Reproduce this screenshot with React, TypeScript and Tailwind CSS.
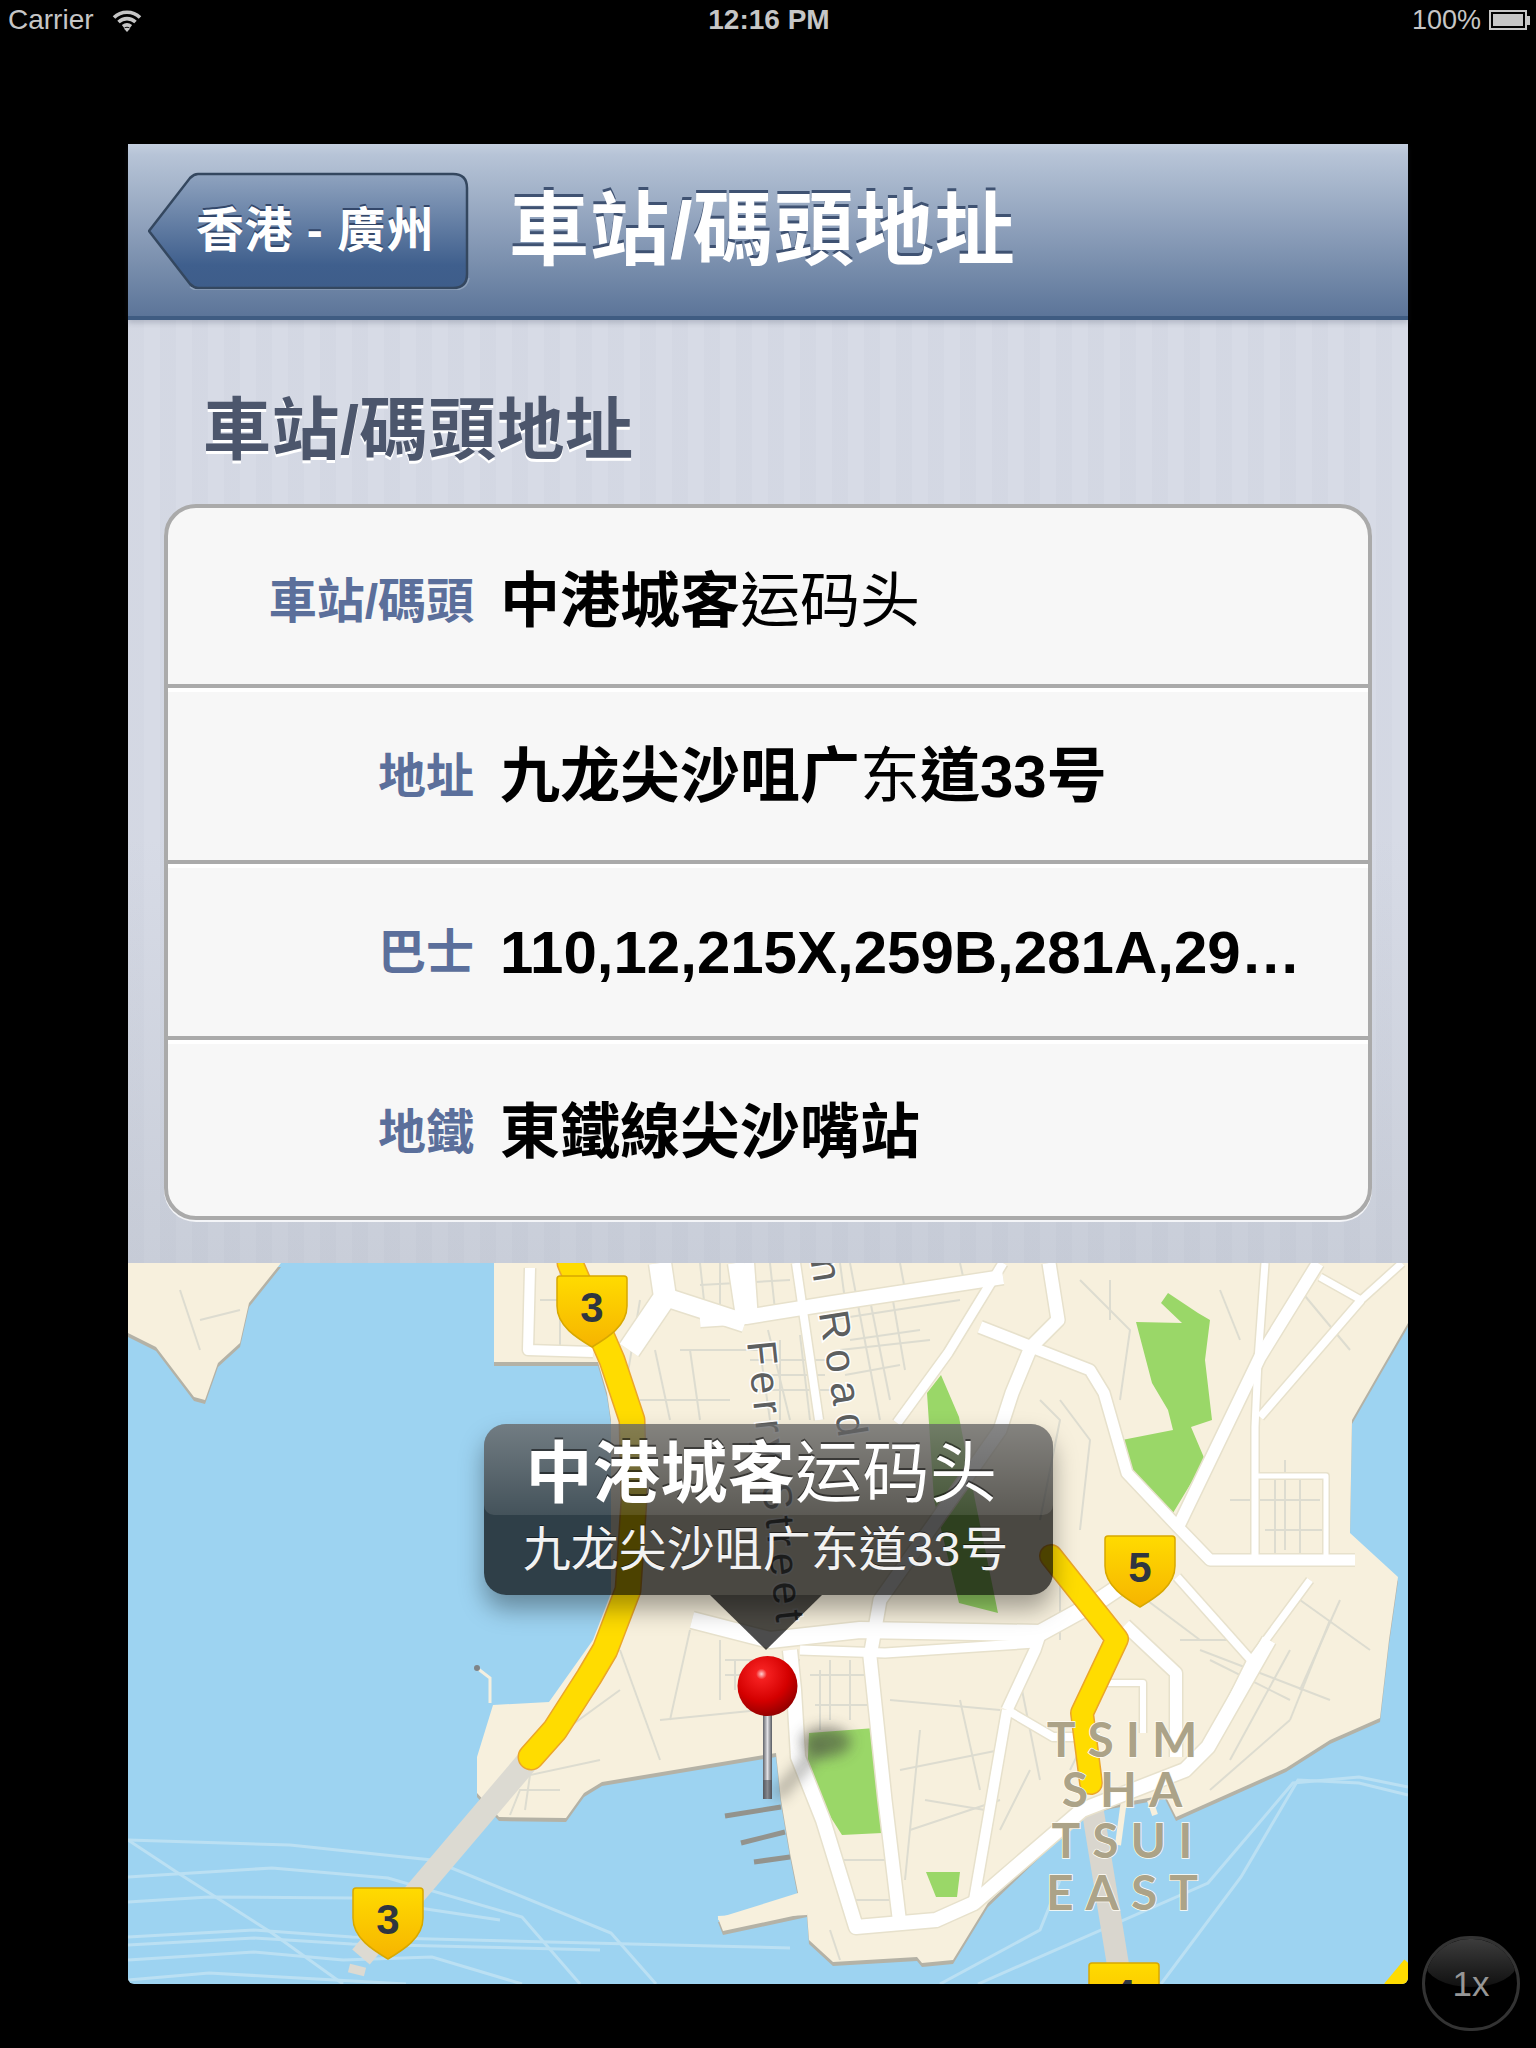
import React from "react";

const land =
  "494,1263 494,1362 598,1362 607,1393 611,1420 611,1593 593,1640 549,1702 493,1705 477,1757 477,1793 499,1817 566,1818 584,1793 602,1782 776,1753 781,1800 790,1853 798,1893 718,1918 723,1931 807,1913 809,1940 833,1962 917,1957 922,1963 953,1960 988,1903 1082,1813 1110,1805 1165,1795 1176,1817 1286,1768 1330,1740 1380,1718 1389,1640 1398,1577 1350,1533 1352,1420 1379,1373 1408,1323 1408,1263";
const islet = "128,1263 281,1263 249,1303 240,1343 218,1363 205,1400 194,1397 156,1347 128,1333";

const parks = [
  "1168,1293 1198,1313 1210,1320 1205,1360 1210,1403 1212,1420 1191,1427 1205,1460 1173,1513 1125,1467 1122,1440 1173,1430 1168,1410 1152,1383 1136,1322 1182,1323 1161,1303",
  "941,1375 959,1417 975,1500 998,1613 959,1603 934,1500 927,1393",
  "809,1733 875,1728 882,1833 842,1835 807,1780",
  "926,1872 960,1872 957,1897 936,1897",
];

const roads: [string, number][] = [
  ["1318,1263 1260,1357 1178,1527", 12],
  ["1265,1263 1258,1360 1255,1427 1255,1560", 7],
  ["1320,1277 1361,1300 1402,1263", 7],
  ["1361,1300 1260,1417", 8],
  ["1049,1263 1058,1320 1031,1347 1012,1393 1000,1430 880,1600 870,1657 885,1800 899,1917", 13],
  ["1031,1347 1090,1370 1104,1393 1127,1473 1178,1527 1210,1560 1355,1560", 11],
  ["980,1327 1031,1347", 12],
  ["1003,1263 948,1353 897,1423", 9],
  ["700,1320 746,1317 833,1303 1003,1277", 14],
  ["746,1263 750,1320", 16],
  ["796,1263 819,1420", 8],
  ["530,1268 528,1350 593,1352", 10],
  ["660,1263 665,1297 629,1350", 22],
  ["665,1297 745,1323", 18],
  ["736,1263 745,1323", 16],
  ["692,1620 770,1640 860,1630 1040,1633 1100,1600 1130,1580", 16],
  ["1177,1577 1251,1660", 8],
  ["1125,1625 1176,1673 1176,1757", 12],
  ["1269,1640 1208,1747 1185,1770 1082,1810 974,1903 936,1920 856,1927 823,1820 798,1757 794,1690 790,1650", 14],
  ["1007,1710 974,1900", 10],
  ["1007,1710 1035,1650 1040,1635", 11],
  ["1007,1710 1053,1737 1100,1737", 8],
  ["800,1650 885,1653 1035,1643", 9],
  ["1105,1683 1143,1683 1143,1733", 6],
  ["1310,1580 1251,1660 1208,1747", 7],
  ["1255,1476 1326,1476 1326,1560", 5],
];

const streets = [
  "540,1300 610,1300", "560,1263 560,1350", "680,1350 760,1350 770,1420", "690,1350 700,1420", "640,1400 730,1400", "655,1350 670,1420",
  "720,1263 720,1320", "780,1340 780,1420", "750,1360 830,1360", "760,1390 830,1390", "850,1263 880,1420", "830,1320 960,1300", "840,1350 930,1340",
  "768,1330 790,1420", "800,1335 810,1420", "760,1375 825,1375", "870,1300 890,1400", "892,1295 905,1370", "850,1340 920,1330", "845,1375 900,1365",
  "700,1263 705,1310", "770,1263 775,1310", "700,1285 790,1280", "840,1263 845,1300", "900,1263 905,1290", "960,1263 965,1285",
  "1080,1280 1130,1330 1120,1400", "1060,1400 1090,1440 1080,1530", "1230,1500 1320,1500", "1285,1460 1285,1550", "1300,1290 1350,1350", "1060,1560 1060,1640",
  "1040,1400 1060,1420 1040,1520", "1110,1280 1110,1320", "1220,1290 1240,1340", "1275,1476 1275,1560", "1300,1476 1300,1560", "1265,1530 1330,1530",
  "1120,1580 1200,1640", "620,1650 660,1760", "660,1720 760,1710", "690,1630 670,1720", "720,1640 720,1700", "740,1660 800,1660",
  "725,1660 765,1660", "725,1675 765,1675", "735,1660 735,1690", "750,1660 750,1690",
  "510,1770 620,1690", "525,1810 530,1775 600,1760", "890,1700 1000,1710", "900,1770 1000,1750", "960,1700 980,1790", "910,1830 1000,1800", "1200,1650 1330,1700",
  "1290,1650 1230,1760", "1330,1620 1290,1720", "830,1660 830,1720", "850,1660 850,1720", "820,1670 820,1730", "830,1860 900,1860", "840,1900 890,1900",
  "810,1675 880,1675", "815,1705 870,1705", "1040,1780 1020,1680", "1070,1770 1090,1730", "1210,1790 1290,1720", "180,1290 200,1350", "200,1320 240,1310",
  "1210,1660 1290,1700", "1180,1640 1240,1640", "1300,1600 1370,1650", "1340,1600 1300,1690", "1000,1830 1030,1770", "920,1730 905,1880", "925,1800 985,1810", "830,1930 840,1960",
  "510,1815 520,1790 560,1790", "620,1420 640,1300",
];

const waterLines = [
  "128,1840 290,1845 432,1860 611,1933 656,1984",
  "128,1877 272,1868 388,1878 522,1917 580,1984",
  "128,1902 209,1897 352,1898 500,1920",
  "128,1840 178,1873 272,1933 343,1984",
  "128,1937 254,1930 352,1937 790,1948",
  "128,1945 254,1938 352,1944 600,1950",
  "128,1960 254,1952 343,1960 432,1957 522,1984",
  "128,1980 209,1973 406,1984",
  "978,1984 1208,1883 1293,1783 1359,1777 1408,1787",
  "1161,1984 1241,1877 1298,1780 1359,1783 1408,1795",
  "940,1984 1040,1930 1060,1880",
];

const yellowA = "570,1263 612,1360 632,1420 634,1500 628,1590 605,1650 589,1677 555,1730 531,1757";
const yellowB = "1051,1556 1117,1639 1082,1713 1091,1783";

function Shield({ x, y, n }: { x: number; y: number; n: string }) {
  return (
    <g transform={`translate(${x} ${y})`}>
      <path
        d="M3 0H67Q70 0 70 3V30C70 50 50 62 35 71C20 62 0 50 0 30V3Q0 0 3 0Z"
        fill="url(#shield)"
        stroke="#d8a800"
        strokeWidth="1.5"
      />
      <text x="35" y="46" textAnchor="middle" fontSize="42" fontWeight="700" fill="#2f3640">
        {n}
      </text>
    </g>
  );
}

function MapArt() {
  return (
    <svg viewBox="128 1263 1280 721" className="block w-[1280px] h-[721px]">
      <defs>
        <linearGradient id="shield" x1="0" y1="0" x2="0" y2="1">
          <stop offset="0" stopColor="#ffdb00" />
          <stop offset="1" stopColor="#f6b400" />
        </linearGradient>
        <radialGradient id="pinHead" cx="0.4" cy="0.3" r="0.75">
          <stop offset="0" stopColor="#ffd0d0" />
          <stop offset="0.12" stopColor="#f52020" />
          <stop offset="0.6" stopColor="#d40000" />
          <stop offset="1" stopColor="#8a0000" />
        </radialGradient>
        <linearGradient id="pinStick" x1="0" y1="0" x2="1" y2="0">
          <stop offset="0" stopColor="#5f6268" />
          <stop offset="0.5" stopColor="#e0e0e4" />
          <stop offset="1" stopColor="#55585e" />
        </linearGradient>
        <filter id="blur8" x="-50%" y="-50%" width="200%" height="200%">
          <feGaussianBlur stdDeviation="7" />
        </filter>
      </defs>

      <rect x="128" y="1263" width="1280" height="721" fill="#9dd3f1" />
      {waterLines.map((p) => (
        <polyline key={p} points={p} fill="none" stroke="#bbe0f3" strokeWidth="3" />
      ))}

      <polygon points={land} fill="#b4b2a6" transform="translate(0 4)" />
      <polygon points={islet} fill="#b4b2a6" transform="translate(0 4)" />
      <polygon points={land} fill="#f7f0dd" />
      <polygon points={islet} fill="#f7f0dd" />

      <polyline points="718,1918 807,1913" stroke="#f7f0dd" strokeWidth="4" fill="none" />
      <polyline points="477,1668 490,1678 490,1703" stroke="#f3efe0" strokeWidth="3" fill="none" />
      <circle cx="477" cy="1668" r="3" fill="#7f8488" />
      {["725,1816 781,1807", "741,1843 785,1832", "754,1862 790,1857"].map((p) => (
        <polyline key={p} points={p} stroke="#93938d" strokeWidth="5" fill="none" />
      ))}
      <polyline points="1124,1800 1118,1845" stroke="#f7f0dd" strokeWidth="6" fill="none" />
      <polyline points="1150,1800 1155,1815" stroke="#f7f0dd" strokeWidth="6" fill="none" />

      {streets.map((p) => (
        <polyline key={p} points={p} fill="none" stroke="#dddcd0" strokeWidth="2" />
      ))}

      {parks.map((p) => (
        <polygon key={p} points={p} fill="#9ad768" />
      ))}

      <polyline points="531,1757 361,1957" stroke="#dcdad2" strokeWidth="23" fill="none" />
      <polyline points="349,1968 365,1972" stroke="#dcdad2" strokeWidth="9" fill="none" />
      <polyline points="1091,1800 1118,1965" stroke="#d9d6ce" strokeWidth="22" fill="none" />

      {roads.map(([p, w]) => (
        <polyline key={p} points={p} fill="none" stroke="#e7e1cc" strokeWidth={w + 3} strokeLinejoin="round" />
      ))}
      {roads.map(([p, w]) => (
        <polyline key={p} points={p} fill="none" stroke="#ffffff" strokeWidth={w} strokeLinejoin="round" />
      ))}

      <path d="M776 1797L822 1745" stroke="#55554f" strokeWidth="12" opacity="0.45" filter="url(#blur8)" />
      <ellipse cx="826" cy="1742" rx="25" ry="15" fill="#3f3f3a" opacity="0.55" filter="url(#blur8)" />

      <polyline points={yellowA} fill="none" stroke="#eba62a" strokeWidth="27" strokeLinecap="round" strokeLinejoin="round" />
      <polyline points={yellowA} fill="none" stroke="#ffdc00" strokeWidth="24" strokeLinecap="round" strokeLinejoin="round" />
      <polyline points={yellowB} fill="none" stroke="#eba62a" strokeWidth="24" strokeLinecap="round" strokeLinejoin="round" />
      <polyline points={yellowB} fill="none" stroke="#ffdc00" strokeWidth="21" strokeLinecap="round" strokeLinejoin="round" />
      <polyline points="1412,1966 1392,1990" fill="none" stroke="#ffdc00" strokeWidth="20" />

      <text
        transform="translate(747 1342) rotate(84)"
        fontSize="41"
        letterSpacing="6"
        fill="#5d5f60"
        stroke="#ffffff"
        strokeWidth="3"
        paintOrder="stroke"
      >
        Ferry Street
      </text>
      <text
        transform="translate(786 1105) rotate(81)"
        fontSize="42"
        letterSpacing="9"
        fill="#5d5f60"
        stroke="#ffffff"
        strokeWidth="3"
        paintOrder="stroke"
      >
        Canton Road
      </text>

      <g
        fontSize="48"
        fontWeight="700"
        letterSpacing="12"
        textAnchor="middle"
        fill="#aca388"
        stroke="#fffdf5"
        strokeWidth="1.5"
        paintOrder="stroke"
        className="font-['Lato',sans-serif]"
      >
        <text x="1128" y="1757">TSIM</text>
        <text x="1128" y="1807">SHA</text>
        <text x="1128" y="1858">TSUI</text>
        <text x="1128" y="1910">EAST</text>
      </g>

      <Shield x={557} y={1276} n="3" />
      <Shield x={1105} y={1536} n="5" />
      <Shield x={353} y={1888} n="3" />
      <Shield x={1089} y={1963} n="4" />

      <rect x="763" y="1712" width="9" height="87" fill="url(#pinStick)" />
      <rect x="763" y="1780" width="9" height="19" fill="#4c5058" opacity="0.6" />
      <ellipse cx="767.5" cy="1686" rx="30" ry="30" fill="url(#pinHead)" />
    </svg>
  );
}

function Row({ label, children, rowClass }: { label: string; children: React.ReactNode; rowClass: string }) {
  return (
    <div className={"flex items-center " + rowClass}>
      <div className="w-[306px] shrink-0 text-right text-[48px] font-bold leading-none text-[#5b6f9b]">{label}</div>
      <div className="ml-[26px] text-[60px] font-bold leading-none text-black whitespace-nowrap">{children}</div>
    </div>
  );
}

export default function App() {
  return (
    <div className="relative w-[1536px] h-[2048px] overflow-hidden bg-black font-['Liberation_Sans','Noto_Sans_CJK_TC',sans-serif]">
      {/* status bar */}
      <div className="flex items-center justify-between h-[40px] pl-[8px] pr-[6px] text-[28px] leading-none text-[#c6c6c6]">
        <div className="flex items-center gap-[18px] w-[400px]">
          <span>Carrier</span>
          <svg width="30" height="23" viewBox="0 0 30 23" fill="none" stroke="#c6c6c6" strokeWidth="3.6">
            <path d="M2 8.5C9 1.5 21 1.5 28 8.5" />
            <path d="M6.5 13C11.5 8.5 18.5 8.5 23.5 13" />
            <path d="M11 17.5C13.5 15.5 16.5 15.5 19 17.5" />
            <path d="M15 23L11.8 19.6C13.8 18.4 16.2 18.4 18.2 19.6Z" fill="#c6c6c6" stroke="none" />
          </svg>
        </div>
        <span className="font-bold">12:16 PM</span>
        <div className="flex items-center justify-end gap-[8px] w-[400px]">
          <span className="text-[27px]">100%</span>
          <div className="flex items-center">
            <div className="w-[38px] h-[20px] border-2 border-[#c6c6c6] p-[2px]">
              <div className="w-full h-full bg-[#c6c6c6]" />
            </div>
            <div className="w-[3px] h-[9px] bg-[#c6c6c6]" />
          </div>
        </div>
      </div>

      {/* app frame */}
      <div className="mt-[104px] mx-[128px] w-[1280px] flex flex-col">
        <div className="relative z-10 flex items-center h-[176px] pt-[2px] pl-[20px] border-b-4 border-[#3f5c82] shadow-[0_3px_5px_rgba(60,70,90,0.22)] bg-[linear-gradient(180deg,#c4cfdf_0%,#b7c4d7_6%,#5c7599_100%)]">
          <div className="relative flex items-center w-[322px] h-[118px] pl-[48px] text-white">
            <svg viewBox="0 0 322 118" className="absolute left-0 top-0 w-[322px] h-[118px]">
              <defs>
                <linearGradient id="backBtn" x1="0" y1="0" x2="0" y2="1">
                  <stop offset="0" stopColor="#8fa3bf" />
                  <stop offset="0.8" stopColor="#3f5f8d" />
                  <stop offset="1" stopColor="#3e5d8a" />
                </linearGradient>
              </defs>
              <path
                d="M1 59L42 6Q46 2 50 2H305Q319 2 319 16V102Q319 116 305 116H50Q46 116 42 112Z"
                fill="url(#backBtn)"
                stroke="#34475f"
                strokeWidth="2.5"
              />
              <path d="M42 115Q46 118 50 118H305Q319 118 321 106" fill="none" stroke="#8ea1ba" strokeWidth="1.5" />
            </svg>
            <span className="relative text-[48px] font-bold leading-none whitespace-pre tracking-[0.5px] [text-shadow:0_-2px_0_#33476a]">
              香港 - 廣州
            </span>
          </div>
          <h1 className="ml-[39px] text-[80px] font-bold leading-none text-white whitespace-nowrap tracking-[0.6px] [text-shadow:0_-3px_0_#3f5272]">
            車站/碼頭地址
          </h1>
        </div>

        <div className="h-[943px] px-[36px] [background:repeating-linear-gradient(90deg,rgba(70,80,110,0.025)_0_16px,transparent_16px_32px),linear-gradient(180deg,#d7dbe6_0%,#d7dbe6_55%,#c9ced9_100%)]">
          <h2 className="h-[184px] pt-[76px] pl-[39px] text-[68px] font-bold leading-none text-[#4c566c] whitespace-nowrap tracking-[0.5px] [text-shadow:0_3px_0_#ffffff]">
            車站/碼頭地址
          </h2>
          <div className="w-[1208px] h-[716px] rounded-[32px] border-4 border-[#aaaaaa] bg-[#f7f7f7] shadow-[0_2px_0_#f4f5f8] overflow-hidden">
            <Row label="車站/碼頭" rowClass="h-[180px] pt-[12px] border-b-4 border-[#aaaaaa] shadow-[0_4px_0_#ffffff]">
              中港城客<span className="font-normal">运码头</span>
            </Row>
            <Row label="地址" rowClass="h-[176px] pt-[6px] border-b-4 border-[#aaaaaa] shadow-[0_4px_0_#ffffff]">
              九龙尖沙咀广<span className="font-normal">东</span>道33号
            </Row>
            <Row label="巴士" rowClass="h-[176px] pt-[6px] border-b-4 border-[#aaaaaa] shadow-[0_4px_0_#ffffff]">
              110,12,215X,259B,281A,29…
            </Row>
            <Row label="地鐵" rowClass="h-[176px] pt-[10px]">
              東鐵線尖沙嘴站
            </Row>
          </div>
        </div>

        <div className="relative h-[721px] overflow-hidden rounded-b-[6px]">
          <MapArt />
          <div className="absolute left-[356px] top-[161px] w-[569px] h-[171px] rounded-[22px] bg-black/70 shadow-[0_14px_24px_rgba(0,0,0,0.35)] text-white flex flex-col items-center">
            <div className="absolute left-0 top-0 w-full h-[91px] rounded-t-[22px] rounded-b-[10px] bg-[linear-gradient(180deg,rgba(255,255,255,0.32),rgba(255,255,255,0.1))]" />
            <div className="relative mt-[17px] mr-[14px] text-[67px] font-bold leading-[66px] whitespace-nowrap tracking-[0.4px] [text-shadow:0_-2px_0_rgba(0,0,0,0.5)]">
              中港城客<span className="font-normal">运码头</span>
            </div>
            <div className="relative mt-[18px] mr-[6px] text-[48px] leading-[50px] whitespace-nowrap text-[#f2f2f2] [text-shadow:0_-1px_0_rgba(0,0,0,0.5)]">
              九龙尖沙咀广东道33号
            </div>
            <svg viewBox="0 0 112 55" className="absolute left-[226px] top-[171px] w-[112px] h-[55px]">
              <path d="M0 0H112L56 55Z" fill="#000000" fillOpacity="0.7" />
            </svg>
          </div>
        </div>
      </div>

      {/* zoom button */}
      <div className="absolute left-[1422px] top-[1936px] w-[98px] h-[95px] rounded-full border-[3px] border-[#333333] bg-black overflow-hidden flex items-center justify-center">
        <div className="absolute left-0 top-0 w-full h-[48px] rounded-b-[50%] bg-[linear-gradient(180deg,#3c3c3c,#101010)]" />
        <span className="relative text-[35px] leading-none text-[#969696]">1x</span>
      </div>
    </div>
  );
}
